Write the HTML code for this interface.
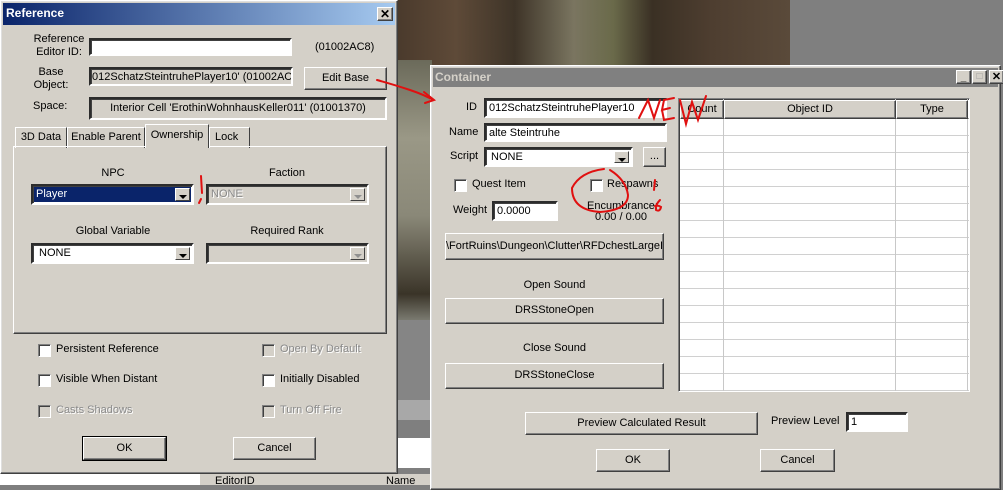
<!DOCTYPE html>
<html><head><meta charset="utf-8"><style>
*{box-sizing:border-box;margin:0;padding:0}
body{width:1003px;height:485px;overflow:hidden;position:relative;background:#7f7f7f;font-family:"Liberation Sans",sans-serif;font-size:11px;color:#000}
.a{position:absolute}
.win{position:absolute;background:#d4d0c8;border:1px solid #fff;border-right-color:#404040;border-bottom-color:#404040;box-shadow:inset -1px -1px #808080,inset 1px 1px #dfdfdf}
.in{position:absolute;background:#fff;border:2px inset #a0a0a0;border-color:#808080 #fff #fff #808080;box-shadow:inset 1px 1px #404040;padding:1px 3px;white-space:nowrap;overflow:hidden;line-height:14px}
.btn{position:absolute;background:#d4d0c8;border:1px solid;border-color:#fff #404040 #404040 #fff;box-shadow:inset -1px -1px #808080;text-align:center;white-space:nowrap;overflow:hidden}
.cb{position:absolute;width:13px;height:13px;background:#fff;border:1px solid;border-color:#808080 #fff #fff #808080;box-shadow:inset 1px 1px #404040}
.cb.d{background:#d4d0c8}
.dis{color:#8a8a8a;text-shadow:1px 1px #fff}
.arrow{position:absolute;right:2px;top:2px;bottom:2px;width:15px;background:#d4d0c8;border:1px solid;border-color:#fff #404040 #404040 #fff}
.arrow:after{content:"";position:absolute;left:3px;top:6px;border-left:4px solid transparent;border-right:4px solid transparent;border-top:4px solid #000}
.arrow.d:after{border-top-color:#909090}
.c{text-align:center}
</style></head><body>
<!-- game background -->
<div class="a" style="left:397px;top:0;width:393px;height:70px;background:linear-gradient(90deg,#4a3a2c,#5e4a38 15%,#3e3428 30%,#7a7560 45%,#6a6a4a 55%,#3a3024 65%,#4e3e30 80%,#5a4a3a)"></div>
<div class="a" style="left:397px;top:60px;width:35px;height:260px;background:linear-gradient(180deg,#6b6a5a,#9a9886 30%,#8a8878 60%,#3a3428 90%,#7a7a70)"></div>
<div class="a" style="left:397px;top:320px;width:35px;height:80px;background:#858585"></div>
<div class="a" style="left:397px;top:400px;width:35px;height:20px;background:#a8a8a8"></div>
<div class="a" style="left:397px;top:438px;width:35px;height:30px;background:#fff"></div>
<div class="a" style="left:200px;top:473px;width:232px;height:12px;background:#d4d0c8;border-top:1px solid #808080"></div>
<div class="a" style="left:0;top:473px;width:200px;height:12px;background:#fff"></div>
<div class="a" style="left:215px;top:475px">EditorID</div>
<div class="a" style="left:386px;top:475px">Name</div>

<!-- Reference window -->
<div class="win" style="left:0;top:0;width:398px;height:474px">
 <div class="a" style="left:2px;top:2px;right:2px;height:22px;background:linear-gradient(90deg,#0a246a,#a6caf0)"></div>
 <div class="a" style="left:5px;top:5px;color:#fff;font-weight:bold;font-size:12px">Reference</div>
 <div class="btn" style="left:376px;top:6px;width:16px;height:14px;font-weight:bold;line-height:12px;font-size:12px">✕</div>
 <div class="a c" style="left:20px;top:32px;width:76px;line-height:13px">Reference<br>Editor ID:</div>
 <div class="in" style="left:88px;top:37px;width:203px;height:18px"></div>
 <div class="a" style="left:314px;top:40px">(01002AC8)</div>
 <div class="a c" style="left:20px;top:65px;width:60px;line-height:13px">Base<br>Object:</div>
 <div class="in" style="left:88px;top:66px;width:204px;height:19px;background:#d4d0c8;padding-left:1px">012SchatzSteintruhePlayer10' (01002AC7</div>
 <div class="btn" style="left:303px;top:66px;width:83px;height:23px;line-height:20px">Edit Base</div>
 <div class="a" style="left:32px;top:99px">Space:</div>
 <div class="in c" style="left:88px;top:96px;width:298px;height:23px;background:#d4d0c8;line-height:17px">Interior Cell 'ErothinWohnhausKeller011' (01001370)</div>
 <!-- tabs -->
 <div class="btn" style="left:14px;top:126px;width:52px;height:21px;border-bottom:none;box-shadow:none;line-height:18px">3D Data</div>
 <div class="btn" style="left:66px;top:126px;width:78px;height:21px;border-bottom:none;box-shadow:none;line-height:18px">Enable Parent</div>
 <div class="btn" style="left:208px;top:126px;width:41px;height:21px;border-bottom:none;box-shadow:none;line-height:18px;text-align:left;padding-left:5px">Lock</div>
 <div class="a" style="left:12px;top:145px;width:374px;height:188px;border:1px solid;border-color:#fff #404040 #404040 #fff;box-shadow:inset -1px -1px #808080"></div>
 <div class="btn" style="left:144px;top:123px;width:64px;height:24px;border-bottom:none;box-shadow:none;line-height:20px;z-index:2">Ownership</div>
 <div class="a c" style="left:32px;top:166px;width:160px">NPC</div>
 <div class="in" style="left:30px;top:183px;width:163px;height:21px;background:#0a246a;color:#fff;box-shadow:inset 1px 1px #404040,inset 0 0 0 1px #fff"> Player<div class="arrow"></div></div>
 <div class="a c" style="left:205px;top:166px;width:162px">Faction</div>
 <div class="in dis" style="left:205px;top:183px;width:163px;height:21px;background:#d4d0c8">NONE<div class="arrow d"></div></div>
 <div class="a c" style="left:32px;top:224px;width:160px">Global Variable</div>
 <div class="in" style="left:30px;top:242px;width:163px;height:21px;padding-left:6px">NONE<div class="arrow"></div></div>
 <div class="a c" style="left:205px;top:224px;width:162px">Required Rank</div>
 <div class="in" style="left:205px;top:242px;width:163px;height:21px;background:#d4d0c8"><div class="arrow d"></div></div>
 <div class="cb" style="left:37px;top:343px"></div><div class="a" style="left:55px;top:342px">Persistent Reference</div>
 <div class="cb" style="left:37px;top:373px"></div><div class="a" style="left:55px;top:372px">Visible When Distant</div>
 <div class="cb d" style="left:37px;top:404px"></div><div class="a dis" style="left:55px;top:403px">Casts Shadows</div>
 <div class="cb d" style="left:261px;top:343px"></div><div class="a dis" style="left:279px;top:342px">Open By Default</div>
 <div class="cb" style="left:261px;top:373px"></div><div class="a" style="left:279px;top:372px">Initially Disabled</div>
 <div class="cb d" style="left:261px;top:404px"></div><div class="a dis" style="left:279px;top:403px">Turn Off Fire</div>
 <div class="btn" style="left:82px;top:436px;width:83px;height:23px;line-height:20px;outline:1px solid #000">OK</div>
 <div class="btn" style="left:232px;top:436px;width:83px;height:23px;line-height:20px">Cancel</div>
</div>

<!-- Container window -->
<div class="win" style="left:430px;top:65px;width:571px;height:425px">
 <div class="a" style="left:2px;top:2px;right:2px;height:19px;background:#808080"></div>
 <div class="a" style="left:4px;top:4px;color:#d4d0c8;font-weight:bold;font-size:12px">Container</div>
 <div class="btn" style="left:525px;top:4px;width:15px;height:14px;font-weight:bold;font-size:10px;line-height:14px">_</div>
 <div class="btn" style="left:541px;top:4px;width:15px;height:14px;font-size:10px;line-height:12px;color:#999">□</div>
 <div class="btn" style="left:558px;top:4px;width:15px;height:14px;font-weight:bold;font-size:11px;line-height:12px">✕</div>
 <div class="a" style="left:35px;top:35px">ID</div>
 <div class="in" style="left:53px;top:32px;width:183px;height:20px">012SchatzSteintruhePlayer10</div>
 <div class="a" style="left:18px;top:60px">Name</div>
 <div class="in" style="left:53px;top:57px;width:183px;height:19px">alte Steintruhe</div>
 <div class="a" style="left:19px;top:84px">Script</div>
 <div class="in" style="left:53px;top:81px;width:149px;height:20px;padding-left:5px">NONE<div class="arrow"></div></div>
 <div class="btn" style="left:212px;top:81px;width:23px;height:20px;line-height:16px">...</div>
 <div class="cb" style="left:23px;top:113px"></div><div class="a" style="left:41px;top:112px">Quest Item</div>
 <div class="cb" style="left:159px;top:113px"></div><div class="a" style="left:176px;top:112px">Respawns</div>
 <div class="a" style="left:22px;top:138px">Weight</div>
 <div class="in" style="left:61px;top:135px;width:66px;height:20px">0.0000</div>
 <div class="a" style="left:156px;top:134px">Encumbrance:</div>
 <div class="a" style="left:164px;top:145px">0.00 / 0.00</div>
 <div class="btn" style="left:14px;top:167px;width:219px;height:27px;line-height:24px;text-align:left">\FortRuins\Dungeon\Clutter\RFDchestLargeI</div>
 <div class="a c" style="left:14px;top:213px;width:219px">Open Sound</div>
 <div class="btn" style="left:14px;top:232px;width:219px;height:26px;line-height:23px">DRSStoneOpen</div>
 <div class="a c" style="left:14px;top:276px;width:219px">Close Sound</div>
 <div class="btn" style="left:14px;top:297px;width:219px;height:26px;line-height:23px">DRSStoneClose</div>
 <!-- list -->
 <div class="a" style="left:247px;top:32px;width:292px;height:294px;background:#fff;border:1px solid;border-color:#808080 #fff #fff #808080;box-shadow:inset 1px 1px #404040;overflow:hidden;
   background-image:linear-gradient(#fff 16px,#d0d0d0 16px);background-size:100% 17px;background-position:0 3px">
  <div class="a" style="left:44px;top:0;bottom:0;width:1px;background:#c8c8c8"></div>
  <div class="a" style="left:216px;top:0;bottom:0;width:1px;background:#c8c8c8"></div>
  <div class="a" style="left:288px;top:0;bottom:0;width:1px;background:#c8c8c8"></div>
  <div class="btn" style="left:1px;top:1px;width:44px;height:19px;line-height:16px">Count</div>
  <div class="btn" style="left:45px;top:1px;width:172px;height:19px;line-height:16px">Object ID</div>
  <div class="btn" style="left:217px;top:1px;width:72px;height:19px;line-height:16px">Type</div>
  <div class="btn" style="left:289px;top:1px;width:10px;height:19px"></div>
 </div>
 <div class="btn" style="left:94px;top:346px;width:233px;height:23px;line-height:20px">Preview Calculated Result</div>
 <div class="a" style="left:340px;top:349px">Preview Level</div>
 <div class="in" style="left:415px;top:346px;width:62px;height:20px">1</div>
 <div class="btn" style="left:165px;top:383px;width:74px;height:23px;line-height:20px">OK</div>
 <div class="btn" style="left:329px;top:383px;width:75px;height:23px;line-height:20px">Cancel</div>
</div>

<!-- red annotations -->
<svg class="a" style="left:0;top:0" width="1003" height="485" fill="none" stroke="#e01010" stroke-width="2" stroke-linecap="round">
 <path d="M377 80 Q395 85 410 90 Q425 95 433 100"/>
 <path d="M424 92 L434 100 L425 103"/>
 <path d="M639 118 L648 100 L654 118 L660 100"/>
 <path d="M674 98 L664 100 L662 110 L670 108 M662 110 L664 120 L674 118"/>
 <path d="M680 100 L686 124 L692 102 L698 120 L706 96"/>
 <path d="M604 169 Q580 172 572 188 Q572 210 600 212 Q628 210 628 195 Q626 180 610 170"/>
 <path d="M655 180 L654 190"/>
 <path d="M660 200 Q655 205 656 210 Q660 212 661 207 Q658 205 655 206"/>
 <path d="M201 176 L202 193 M201 199 L199 203"/>
</svg>
</body></html>
